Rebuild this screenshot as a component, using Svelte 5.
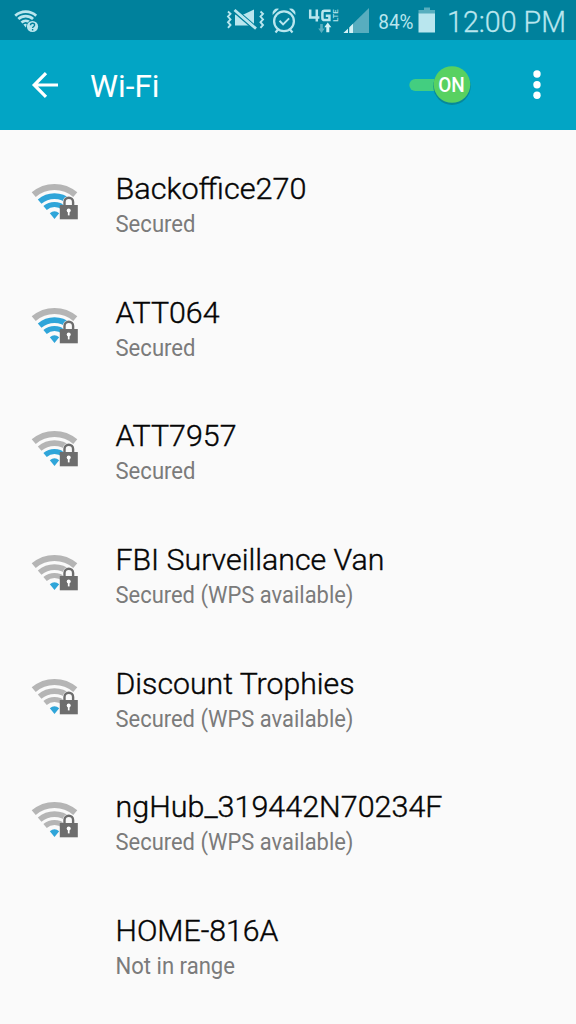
<script>
  const networks = [
    { name: 'Backoffice270', status: 'Secured', level: 3, w: 190, s: 80 },
    { name: 'ATT064', status: 'Secured', level: 3, w: 103, s: 80 },
    { name: 'ATT7957', status: 'Secured', level: 2, w: 120, s: 80 },
    { name: 'FBI Surveillance Van', status: 'Secured (WPS available)', level: 1, w: 268, s: 238 },
    { name: 'Discount Trophies', status: 'Secured (WPS available)', level: 1, w: 238, s: 238 },
    { name: 'ngHub_319442N70234F', status: 'Secured (WPS available)', level: 1, w: 326, s: 238 },
    { name: 'HOME-816A', status: 'Not in range', level: 0, w: 162, s: 119.5 }
  ];

  const rings = [
    { level: 2, r: 14.5, width: 5.2 },
    { level: 3, r: 22.9, width: 5.6 },
    { level: 4, r: 32, width: 6.2 }
  ];

  function arc(cx, cy, r, deg = 40.5) {
    const a = (deg * Math.PI) / 180;
    const dx = r * Math.sin(a);
    const y = cy - r * Math.cos(a);
    return `M${cx - dx} ${y}A${r} ${r} 0 0 1 ${cx + dx} ${y}`;
  }
</script>

<div class="screen">
  <div class="status">
    <svg width="576" height="40" viewBox="0 0 576 40">
      <g fill="none" stroke="#b9e6ee" stroke-width="2.7">
        <path d={arc(25.7, 27, 15.4, 43)} />
        <path d={arc(25.7, 27, 10.8, 43)} />
        <path d={arc(25.7, 27, 6.2, 43)} />
      </g>
      <path d="M23.4 24.6q2.3-1.8 4.6 0L25.7 27.4z" fill="#b9e6ee" />
      <circle cx="32.5" cy="26.5" r="6.3" fill="#00819c" />
      <circle cx="32.5" cy="26.5" r="5.6" fill="#b9e6ee" />
      <path d="M30.5 25.3c0-2.8 4.1-2.7 4.1-.3 0 1.4-2 1.5-2 3.1M32.6 29v1.5" fill="none" stroke="#00819c" stroke-width="1.4" />

      <path d="M235 14.5h8.5L254 9.5V28l-5-2.5H235z" fill="#b9e6ee" />
      <path d="M234 12.2l22 19" stroke="#00819c" stroke-width="1.6" />
      <path d="M235 8.2l21 18.2" stroke="#00819c" stroke-width="1.4" />
      <path d="M234.5 10l21.5 18.6" stroke="#b9e6ee" stroke-width="2.8" />
      <g fill="none" stroke="#b9e6ee" stroke-width="1.9">
        <path d="M228 11.5l2.5 2.3-2.5 2.8 2.5 2.8-2.5 2.8 2.5 2.8-2.5 2.8M260.5 11.5l2.5 2.3-2.5 2.8 2.5 2.8-2.5 2.8 2.5 2.8-2.5 2.8" />
        <circle cx="284" cy="21.3" r="9.9" stroke-width="2.3" />
        <path d="M279.5 20.8l3.6 3.6 6-6" stroke-width="2" />
        <path d="M278 29.5l-2.5 3M290 29.5l2.5 3" stroke-width="2.2" />
      </g>
      <path d="M272.6 15a5 5 0 0 1 6.4-6.2zM295.4 15a5 5 0 0 0-6.4-6.2z" fill="#b9e6ee" />

      <path d="M310.2 9.5V17.4H319.4M316.8 9.5V21.5M330.6 10.7h-6q-2.2 0-2.2 2.2v5q0 2.2 2.2 2.2h4.8v-4.4h-3.6" fill="none" stroke="#b9e6ee" stroke-width="2.5" />
      <text transform="translate(338.2 21.8) rotate(-90)" font-size="7.2" font-weight="500" textLength="12.4" lengthAdjust="spacingAndGlyphs">LTE</text>
      <path d="M320.2 24h2.6v4.6h2L321.5 33l-3.3-4.4h2z" fill="#58adbf" />
      <path d="M327.8 22.5l3.5 4.7h-2v5h-3v-5h-2z" fill="#d4f1f5" />
      <path d="M343.5 33L369 8v25z" fill="#58adbf" />
      <path d="M343.5 33l9.5-9.3V33z" fill="#d4f1f5" />
      <path d="M348.6 24v9" stroke="#00819c" stroke-width="1.2" />

      <path d="M424 7.5h6V10h5v4h-16.5v-4h5.5z" fill="#57aebe" />
      <path d="M418.5 13.5H435v19h-16.5z" fill="#b9e6ee" />
      <text x="378.3" y="28.6" font-size="19.5" textLength="35.2" lengthAdjust="spacingAndGlyphs">84%</text>
      <text x="447" y="32.3" font-size="29.5" textLength="119" lengthAdjust="spacingAndGlyphs" class="clock">12:00 PM</text>
    </svg>
  </div>

  <header>
    <svg width="576" height="90" viewBox="0 40 576 90">
      <path d="M58 85H34.5M46 73.2L34.2 85 46 96.8" fill="none" stroke="#fff" stroke-width="3.2" />
      <text x="90" y="97.2" font-size="31.5" textLength="69.5" lengthAdjust="spacingAndGlyphs" fill="#fff">Wi-Fi</text>
      <rect x="409.3" y="79" width="40" height="12" rx="6" fill="#43ce80" />
      <circle cx="452" cy="86.2" r="18.7" fill="#087f8c" opacity=".75" />
      <circle cx="452" cy="84.5" r="18.3" fill="#58d161" />
      <text x="438.2" y="91.9" font-size="20" font-weight="500" textLength="26.5" lengthAdjust="spacingAndGlyphs" class="on">ON</text>
      <g fill="#fff">
        <circle cx="537" cy="74" r="3.7" /><circle cx="537" cy="84.7" r="3.7" /><circle cx="537" cy="95.3" r="3.7" />
      </g>
    </svg>
  </header>

  <ul>
    {#each networks as n}
      <li>
        <div class="signal">
          {#if n.level > 0}
            <svg width="54" height="44" viewBox="28 180 54 44">
              {#each rings as ring}
                <path d={arc(54.5, 219, ring.r)} fill="none" stroke={n.level >= ring.level ? '#2fa5d9' : '#b5b5b5'} stroke-width={ring.width} />
              {/each}
              <path d="M49.8 213.2q4.7-3.8 9.4 0L54.5 219z" fill="#2fa5d9" />
              <path d="M64.5 206v-4a4.3 4.3 0 0 1 8.6 0v4" fill="#fafafa" stroke="#fafafa" stroke-width="3.6" />
              <path d="M64.5 206v-4a4.3 4.3 0 0 1 8.6 0v4" fill="none" stroke="#6d6d6d" stroke-width="2.4" />
              <rect x="59.8" y="205" width="18" height="14.3" fill="#6d6d6d" />
              <circle cx="68.7" cy="210.4" r="2" fill="#fff" />
              <path d="M68.7 210v5.4" stroke="#fff" stroke-width="1.7" />
            </svg>
          {/if}
        </div>
        <svg class="label" width="440" height="70" viewBox="115 170 440 70">
          <text x="115.5" y="199.2" font-size="30.4" textLength={n.w + 1} lengthAdjust="spacingAndGlyphs" class="name">{n.name}</text>
          <text x="115.5" y="231.8" font-size="23" textLength={n.s} lengthAdjust="spacingAndGlyphs" class="sub">{n.status}</text>
        </svg>
      </li>
    {/each}
  </ul>
</div>

<style>
  :global(body) { margin: 0; background: #fafafa; }
  .screen {
    width: 576px;
    height: 1024px;
    overflow: hidden;
    display: flex;
    flex-direction: column;
    background: #fafafa;
    font-family: Roboto, sans-serif;
  }
  svg { display: block; }
  .status { height: 40px; flex: none; background: #00819c; }
  .status text { fill: #b9e6ee; }
  .status .clock { font-weight: 300; stroke: #b9e6ee; stroke-width: 0.3px; }
  header { height: 89.5px; flex: none; background: #02a5c5; overflow: hidden; }
  .on { fill: #fff; }
  ul { list-style: none; margin: 0; padding: 12.5px 0 0 28px; }
  li {
    height: 123.67px;
    display: flex;
    align-items: flex-start;
    padding-top: 28px;
    box-sizing: border-box;
  }
  .signal { width: 87px; padding-top: 10px; flex: none; }
  .label { overflow: visible; }
  .name { fill: #050505; font-weight: 300; stroke: #050505; stroke-width: 0.4px; }
  .sub { fill: #7b7b7b; }
</style>
